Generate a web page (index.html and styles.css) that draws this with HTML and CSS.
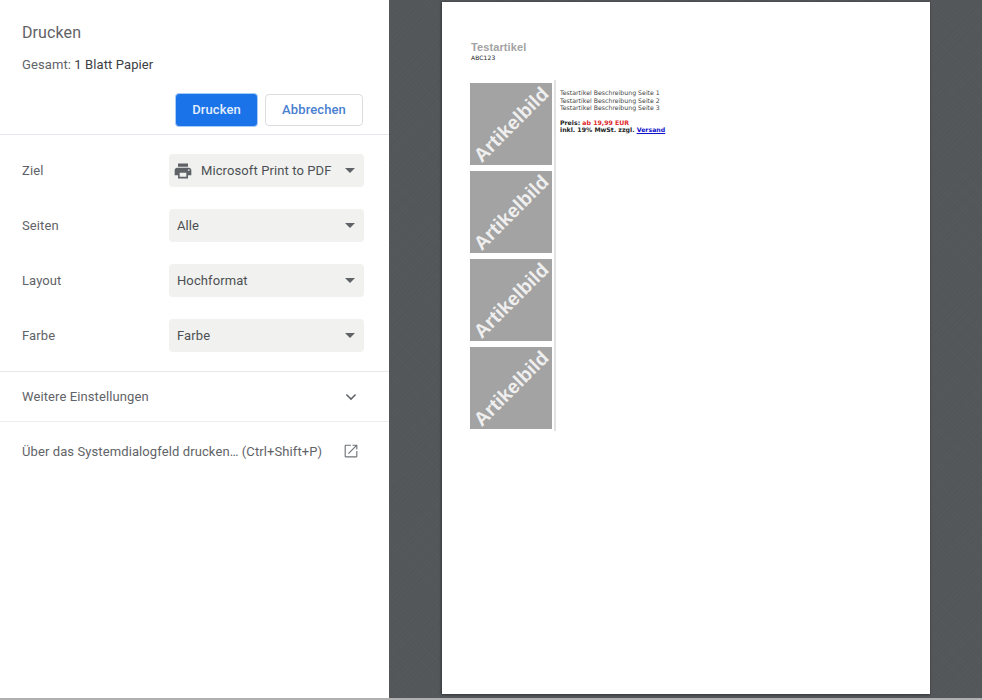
FILE: index.html
```html
<!DOCTYPE html>
<html lang="de">
<head>
    <meta charset="UTF-8">
    <title>Drucken</title>
    <link rel="stylesheet" href="styles.css">
</head>
<body>
    <div class="main">
        <div class="sidebar">
            <div class="header">
                <h1>Drucken</h1>
                <p class="summary">Gesamt: <span>1 Blatt Papier</span></p>
                <div class="buttons">
                    <button class="btn primary">Drucken</button>
                    <button class="btn secondary">Abbrechen</button>
                </div>
            </div>
            <div class="settings">
                <div class="row">
                    <span class="label">Ziel</span>
                    <div class="select dest">
                        <svg class="printer" width="20" height="20" viewBox="0 0 24 24"><path fill="#5f6368" d="M19 8H5c-1.66 0-3 1.34-3 3v6h4v4h12v-4h4v-6c0-1.66-1.34-3-3-3zm-3 11H8v-5h8v5zm3-7c-.55 0-1-.45-1-1s.45-1 1-1 1 .45 1 1-.45 1-1 1zm-1-9H6v4h12V3z"/></svg>
                        <span>Microsoft Print to PDF</span>
                        <i class="caret"></i>
                    </div>
                </div>
                <div class="row">
                    <span class="label">Seiten</span>
                    <div class="select"><span>Alle</span><i class="caret"></i></div>
                </div>
                <div class="row">
                    <span class="label">Layout</span>
                    <div class="select"><span>Hochformat</span><i class="caret"></i></div>
                </div>
                <div class="row">
                    <span class="label">Farbe</span>
                    <div class="select"><span>Farbe</span><i class="caret"></i></div>
                </div>
            </div>
            <div class="more">
                <span>Weitere Einstellungen</span>
                <svg width="20" height="20" viewBox="0 0 24 24"><path fill="none" stroke="#5f6368" stroke-width="1.8" d="M6.5 9l5.5 5.5L17.5 9"/></svg>
            </div>
            <div class="system">
                <span>Über das Systemdialogfeld drucken… (Ctrl+Shift+P)</span>
                <svg width="18" height="18" viewBox="0 0 24 24"><path fill="#6f7377" d="M19 19H5V5h7V3.6H5c-.9 0-1.5.6-1.5 1.4v14c0 .8.6 1.5 1.5 1.5h14c.8 0 1.5-.7 1.5-1.5v-7H19v7zM14 3.5V5h3.9l-9.9 9.9 1.1 1.1L19 6.1V10h1.5V3.5H14z"/></svg>
            </div>
        </div>
        <div class="preview">
            <div class="paper">
                <h2>Testartikel</h2>
                <div class="sku">ABC123</div>
                <div class="product">
                    <div class="images">
                        <div class="tile"><span>Artikelbild</span></div>
                        <div class="tile"><span>Artikelbild</span></div>
                        <div class="tile"><span>Artikelbild</span></div>
                        <div class="tile"><span>Artikelbild</span></div>
                    </div>
                    <div class="details">
                        <div>Testartikel Beschreibung Seite 1</div>
                        <div>Testartikel Beschreibung Seite 2</div>
                        <div>Testartikel Beschreibung Seite 3</div>
                        <div class="price">Preis: <em>ab 19,99 EUR</em><br>inkl. 19% MwSt. zzgl. <a href="#">Versand</a></div>
                    </div>
                </div>
            </div>
        </div>
    </div>
    <div class="bottom-bar"></div>
</body>
</html>
```

FILE: styles.css
```css
* {
    margin: 0;
    padding: 0;
    box-sizing: border-box;
}

html, body {
    height: 100%;
}

body {
    display: flex;
    flex-direction: column;
    font-family: Roboto, 'Liberation Sans', sans-serif;
    font-size: 13px;
    letter-spacing: 0.1px;
    color: #5f6368;
    background: #fff;
    overflow: hidden;
}

.main {
    display: flex;
    flex: 1;
    min-height: 0;
}

.bottom-bar {
    height: 2px;
    background: #b0b0b0;
}

/* Left panel */
.sidebar {
    width: 389px;
    flex-shrink: 0;
    background: #fff;
}

.header {
    height: 135px;
    padding: 24px 26px 0 22px;
    border-bottom: 1px solid #e3e6ea;
}

.header h1 {
    font-size: 16px;
    font-weight: 400;
    line-height: 18px;
}

.summary {
    margin-top: 14px;
    line-height: 18px;
}

.summary span {
    color: #3c4043;
}

.buttons {
    display: flex;
    justify-content: flex-end;
    align-items: center;
    gap: 7px;
    margin-top: 19px;
}

.btn {
    font-family: inherit;
    font-size: 13px;
    font-weight: 500;
    letter-spacing: 0.1px;
    padding-bottom: 2px;
    border-radius: 4px;
}

.primary {
    width: 83px;
    height: 34px;
    color: #e3eefc;
    background: #1a73e8;
    border: 1px solid #a9cbf5;
}

.secondary {
    width: 98px;
    height: 32px;
    color: #4a7fcf;
    background: #fff;
    border: 1px solid #dadce0;
}

.settings {
    height: 237px;
    padding: 19px 25px 0 22px;
    border-bottom: 1px solid #e6e8ea;
}

.row {
    display: flex;
    justify-content: space-between;
    align-items: center;
    height: 33px;
    margin-bottom: 22px;
}

.select {
    display: flex;
    align-items: center;
    width: 195px;
    height: 33px;
    padding: 0 8px;
    color: #4c5054;
    background: #f1f2ef;
    border-radius: 4px;
}

.select .caret {
    margin-left: auto;
    margin-right: 1px;
    border-left: 5px solid transparent;
    border-right: 5px solid transparent;
    border-top: 5px solid #5f6368;
}

.dest {
    padding-left: 4px;
}

.printer {
    margin-right: 8px;
}

.more, .system {
    display: flex;
    justify-content: space-between;
    align-items: center;
    padding: 0 29px 0 22px;
}

.more {
    height: 50px;
    border-bottom: 1px solid #ebedef;
}

.more svg {
    margin-right: -1px;
}

.system {
    height: 60px;
    padding-bottom: 2px;
}

/* Preview */
.preview {
    flex: 1;
    padding: 2px 52px 0 53px;
    background-color: #54575a;
    background-image:
        repeating-linear-gradient(45deg, rgba(255, 255, 255, 0.012) 0 1px, transparent 1px 3px),
        repeating-linear-gradient(-45deg, rgba(0, 0, 0, 0.02) 0 1px, transparent 1px 4px);
}

.paper {
    height: 692px;
    padding: 39px 0 0 29px;
    background: #fff;
    box-shadow: -1px 0 2px #3a3c3f, 0 1px 2px #3a3c3f;
    font-family: 'DejaVu Sans', sans-serif;
    color: #222;
}

.paper h2 {
    font-family: 'Liberation Sans', sans-serif;
    font-size: 11px;
    line-height: 13px;
    color: #a3a3a3;
}

.sku {
    font-size: 6px;
    line-height: 8px;
}

.product {
    display: flex;
    margin-top: 18px;
    margin-left: -1px;
}

.images {
    display: flex;
    flex-direction: column;
    gap: 6px;
    padding: 3px 2px 2px 0;
    border-right: 2px solid #e2e2e2;
}

.tile {
    display: flex;
    align-items: center;
    justify-content: center;
    width: 82px;
    height: 82px;
    background: #a3a3a3;
}

.tile span {
    font-family: 'Liberation Sans', sans-serif;
    font-size: 19.5px;
    font-weight: 700;
    white-space: nowrap;
    color: #efefef;
    transform: rotate(-45deg);
}

.details {
    padding: 9px 0 0 4px;
    font-size: 6.22px;
    line-height: 7.5px;
    letter-spacing: 0;
    color: #444;
}

.price {
    margin-top: 7px;
    font-weight: 700;
    color: #222;
}

.price em {
    font-style: normal;
    color: #e0282a;
}

.price a {
    color: #1111cc;
}
```
